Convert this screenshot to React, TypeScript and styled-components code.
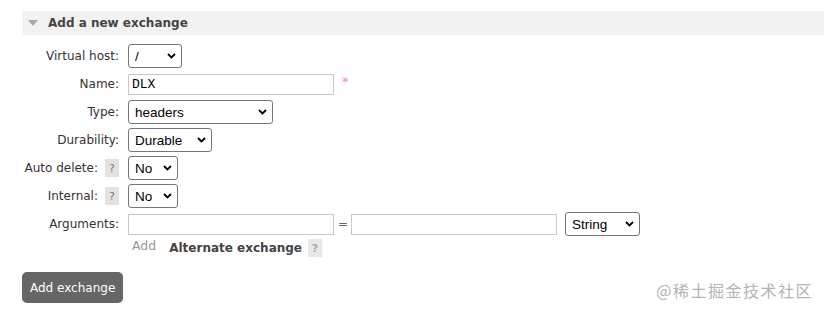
import React from 'react';
import styled, { createGlobalStyle } from 'styled-components';

const GlobalStyle = createGlobalStyle`
  html, body {
    margin: 0;
    padding: 0;
    background: #ffffff;
  }
  body {
    font-family: 'DejaVu Sans', Verdana, sans-serif;
    font-size: 12px;
    color: #444;
  }
`;

const Page = styled.div({
  position: 'relative',
  width: '824px',
  height: '316px',
  padding: '11px 0 0 22px',
  boxSizing: 'border-box',
  overflow: 'hidden'
});

const SectionHeader = styled.div({
  display: 'flex',
  alignItems: 'center',
  height: '24px',
  background: '#f2f2f2',
  paddingLeft: '6px',
  gap: '10px'
});

const Triangle = styled.span({
  width: 0,
  height: 0,
  borderLeft: '5px solid transparent',
  borderRight: '5px solid transparent',
  borderTop: '6px solid #aaa'
});

const HeaderTitle = styled.h2({
  margin: 0,
  fontSize: '12px',
  fontWeight: 'bold',
  color: '#444'
});

const Form = styled.div({
  display: 'grid',
  gridTemplateColumns: '97px auto',
  gridAutoRows: '28px',
  columnGap: '9px',
  alignItems: 'center',
  marginTop: '7px'
});

const Label = styled.label({
  display: 'flex',
  alignItems: 'center',
  justifyContent: 'flex-end',
  gap: '7px',
  whiteSpace: 'nowrap',
  color: '#333',
  marginLeft: '-22px'
});

const Help = styled.span<{ $dim?: boolean }>(({ $dim }) => ({
  display: 'inline-flex',
  alignItems: 'center',
  justifyContent: 'center',
  width: '14px',
  height: '18px',
  background: $dim ? '#e8e8e8' : '#e2e2e2',
  color: $dim ? '#aaa' : '#777',
  fontSize: '11px'
}));

const Controls = styled.div({
  display: 'flex',
  alignItems: 'center',
  gap: '8px'
});

const SelectWrap = styled.div<{ $width: number }>(({ $width }) => ({
  position: 'relative',
  width: `${$width}px`,
  height: '24px'
}));

const NativeSelect = styled.select({
  appearance: 'none',
  width: '100%',
  height: '100%',
  margin: 0,
  padding: '0 18px 0 6px',
  border: '1px solid #767676',
  borderRadius: '3px',
  background: '#fff',
  color: '#000',
  fontFamily: "'Liberation Sans', Arial, sans-serif",
  fontSize: '13.5px',
  outline: 'none'
});

const Chevron = styled.svg({
  position: 'absolute',
  right: '6px',
  top: '9px',
  pointerEvents: 'none'
});

const TextInput = styled.input<{ $width: number }>(({ $width }) => ({
  width: `${$width}px`,
  height: '21px',
  boxSizing: 'border-box',
  margin: 0,
  padding: '0 3px',
  border: '1px solid #c8c8c8',
  background: '#fff',
  color: '#000',
  fontFamily: "'Liberation Mono', 'Courier New', monospace",
  fontSize: '13px',
  outline: 'none'
}));

const Required = styled.span({
  color: '#f08aa5',
  fontSize: '13px',
  marginTop: '-6px'
});

const Equals = styled.span({
  color: '#666',
  fontSize: '12px',
  margin: '0 -5px 0 -4px'
});

const ExtraRow = styled.div({
  display: 'flex',
  alignItems: 'center',
  gap: '13px',
  gridColumn: '2',
  height: '20px',
  paddingLeft: '4px',
  marginTop: '-8px'
});

const AddLink = styled.span({
  color: '#999',
  fontSize: '12.5px',
  marginTop: '-6px'
});

const Alternate = styled.span({
  fontWeight: 'bold',
  fontSize: '12px',
  color: '#444',
  display: 'flex',
  alignItems: 'center',
  gap: '6px'
});

const SubmitButton = styled.button({
  marginTop: '6px',
  height: '31px',
  padding: '0 8px',
  border: 'none',
  borderRadius: '5px',
  background: '#666',
  color: '#fff',
  fontFamily: "'DejaVu Sans', Verdana, sans-serif",
  fontSize: '12px',
  cursor: 'pointer'
});

const Watermark = styled.div({
  position: 'absolute',
  right: '11px',
  bottom: '14px',
  color: '#b4b4b4',
  fontFamily: "'Noto Sans CJK SC', sans-serif",
  fontSize: '16px',
  letterSpacing: '1.5px'
});

function Select({ width, options }: { width: number; options: string[] }) {
  return (
    <SelectWrap $width={width}>
      <NativeSelect defaultValue={options[0]}>
        {options.map((o) => (
          <option key={o}>{o}</option>
        ))}
      </NativeSelect>
      <Chevron width="9" height="6" viewBox="0 0 9 6">
        <path d="M1 1l3.5 3.5L8 1" fill="none" stroke="#000" strokeWidth="1.8" />
      </Chevron>
    </SelectWrap>
  );
}

export default function App() {
  return (
    <Page>
      <GlobalStyle />
      <SectionHeader>
        <Triangle />
        <HeaderTitle>Add a new exchange</HeaderTitle>
      </SectionHeader>
      <Form>
        <Label>Virtual host:</Label>
        <Controls>
          <Select width={54} options={['/']} />
        </Controls>

        <Label>Name:</Label>
        <Controls>
          <TextInput $width={206} defaultValue="DLX" />
          <Required>*</Required>
        </Controls>

        <Label>Type:</Label>
        <Controls>
          <Select width={145} options={['headers', 'direct', 'fanout', 'topic']} />
        </Controls>

        <Label>Durability:</Label>
        <Controls>
          <Select width={84} options={['Durable', 'Transient']} />
        </Controls>

        <Label>
          Auto delete: <Help>?</Help>
        </Label>
        <Controls>
          <Select width={50} options={['No', 'Yes']} />
        </Controls>

        <Label>
          Internal: <Help>?</Help>
        </Label>
        <Controls>
          <Select width={50} options={['No', 'Yes']} />
        </Controls>

        <Label>Arguments:</Label>
        <Controls>
          <TextInput $width={206} />
          <Equals>=</Equals>
          <TextInput $width={206} />
          <Select width={75} options={['String', 'Number', 'Boolean', 'List']} />
        </Controls>

        <ExtraRow>
          <AddLink>Add</AddLink>
          <Alternate>
            Alternate exchange <Help $dim>?</Help>
          </Alternate>
        </ExtraRow>
      </Form>
      <SubmitButton>Add exchange</SubmitButton>
      <Watermark>@稀土掘金技术社区</Watermark>
    </Page>
  );
}
